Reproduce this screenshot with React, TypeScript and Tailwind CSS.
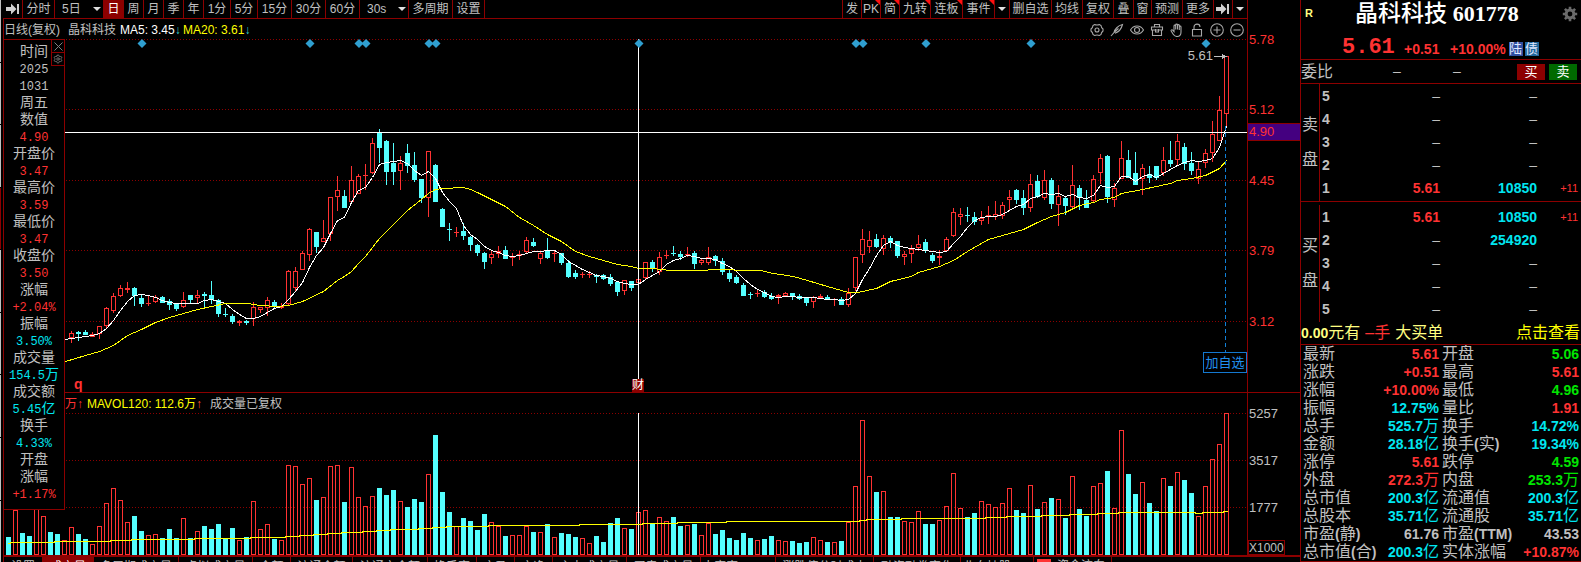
import React from "react";
import { Settings } from "lucide-react";

/* ------------------------------------------------------------------ data */

const UP = "#ff3232";
const DOWN = "#54ffff";
const GRID = "#8c0000";

// One entry per session: c = close down, r = close up, followed by the top of the volume bar.
const VOLUME = `c537 r510 c533 c536 r500 r516 c532 c534 r540 r527 c534 c539 r544 r526 r503 r488 r500 r522 c516 c531
r535 r534 c538 c529 c538 r518 c538 r531 c526 c529 c524 c538 c528 r540 c537 r501 r529 r524 c539 r540
r465 r466 r484 r478 c500 r497 r466 r465 c502 r467 r497 r506 r496 c488 c495 c490 r501 c507 c499 c502
r474 c435 c492 c512 r526 c518 c521 c530 c514 r522 r526 c536 r535 r535 r526 c532 r532 c524 r537 c533
c534 c537 r538 r543 c536 c542 c523 c518 r528 c529 r512 r510 c523 r517 r521 c517 c526 r525 c524 r535
r523 c534 c530 c538 c540 c533 c538 r540 c539 c536 r540 r541 c541 c543 c542 r537 r540 c542 r542 c541
r522 r486 r420 r476 c492 r491 c517 c517 r521 r522 r511 c524 c524 r520 r506 r473 r508 c517 c513 r501
r504 r507 r503 r488 c510 c513 r485 c509 r502 c498 r499 c518 r476 c509 c516 r486 r483 c471 r508 r430
c474 c494 r482 c503 c511 r478 c486 r472 c480 c493 r516 r486 r459 r444 r413`
  .split(/\s+/)
  .map((s) => ({ up: s[0] === "r", top: Number(s.slice(1)) }));

// high, body top, body bottom, low for each session, starting with FIRST_CANDLE.
const FIRST_CANDLE = 9;
const CANDLES = `331,333,337,342 331,332,333,340 330,332,334,334 332,334,336,336 326,326,333,338 307,308,325,327
293,296,310,312 285,288,295,296 282,288,289,292 287,288,295,305 295,298,303,306 296,303,303,305
295,297,301,302 296,297,302,302 299,301,304,309 303,303,308,310 292,300,306,307 295,295,299,303
290,295,297,302 292,294,295,307 281,295,299,303 299,300,313,316 308,314,314,316 314,316,321,323
320,321,322,325 320,321,322,324 302,307,318,325 307,307,309,312 297,300,307,315 300,302,305,307
303,306,307,308 270,271,303,304 267,271,287,290 251,253,269,269 228,229,254,260 232,232,246,252
220,238,241,241 197,197,233,240 176,190,196,210 190,196,207,207 166,180,201,202 174,176,193,193
164,175,175,189 138,143,172,173 129,132,147,162 140,141,171,184 143,163,171,184 156,163,170,189
144,153,165,172 152,165,179,181 179,179,197,202 151,151,197,216 164,165,201,201 208,209,226,226
223,229,229,240 227,232,232,236 223,231,235,239 236,237,244,250 244,245,252,255 252,253,261,268
250,254,257,263 246,251,253,257 246,250,258,258 253,256,257,265 251,254,255,259 237,240,251,252
238,242,245,246 251,253,258,263 238,251,257,258 251,253,253,261 253,253,262,264 260,263,276,277
270,273,276,278 272,274,274,277 271,274,274,277 274,275,276,282 274,275,278,279 274,277,283,285
281,282,291,295 280,280,290,294 281,281,287,290 269,279,282,282 262,262,277,278 260,262,268,271
252,257,271,274 250,255,255,258 246,253,253,255 251,254,256,259 247,254,254,256 251,253,263,268
258,260,262,264 247,257,262,264 255,256,260,265 258,261,271,274 269,273,278,281 275,277,282,283
283,285,295,295 292,294,294,298 289,293,293,296 290,292,296,297 293,296,298,299 294,295,296,303
292,293,295,295 293,293,295,299 294,296,298,299 297,298,302,305 296,297,301,307 294,296,297,298
295,297,299,299 298,299,299,305 297,299,304,304 288,293,304,306 257,257,287,290 229,239,254,262
231,240,246,252 234,239,246,247 235,238,248,254 236,238,242,247 241,241,255,257 251,254,256,264
245,249,253,262 235,244,247,250 239,242,250,252 253,255,260,262 250,256,257,264 237,239,250,250
208,212,235,236 208,214,216,224 207,215,215,221 212,217,221,224 211,218,220,224 206,215,216,223
201,214,216,219 202,205,215,218 190,197,199,209 189,190,199,203 190,198,207,214 174,184,207,211
175,181,196,197 170,180,197,199 178,180,203,208 185,196,204,225 196,198,205,214 165,185,206,208
185,188,197,209 190,200,207,207 175,179,200,202 154,158,172,183 155,156,196,202 183,188,199,206
141,158,178,178 150,160,177,177 152,173,184,184 164,168,178,194 166,174,177,182 166,166,177,179
147,160,172,175 141,160,163,166 134,141,159,165 143,147,163,169 152,163,170,174 162,169,178,183
149,153,162,167 121,134,152,161 96,110,140,140 56,56,113,126`
  .split(/\s+/)
  .map((s) => s.split(",").map(Number));

const MA5 = `338 337 336 335 333 328 320 310 301 295 294 295 297 300 302 303 303 303 303 300 299 301 303 309 314 318
318 316 312 308 306 299 291 282 267 255 247 233 220 217 202 190 187 177 164 162 161 160 163 170 175 171 178 192
201 208 225 234 239 246 250 252 255 256 255 253 251 251 250 250 254 261 265 269 272 275 276 278 281 283 284 284
279 275 271 264 260 258 255 256 258 258 259 263 266 271 278 284 289 292 296 297 296 296 297 297 297 298 299 299
300 299 293 279 268 255 245 241 245 247 248 249 250 251 252 251 243 236 227 220 217 216 216 214 210 206 204 198
196 193 194 193 196 194 197 198 195 185 187 186 176 176 181 176 174 177 173 169 165 162 160 161 160 158 147 126`
  .split(/\s+/)
  .map((y, k) => `${8 + 7 * (k + FIRST_CANDLE)},${y}`)
  .join(" ");

const MA20 =
  "65,361 85,355 99,351 113,345 127,335 141,329 155,322 169,317 183,313 197,309 211,306 225,303 247,303 260,305 277,306 288,305 302,301 323,291 337,280 344,276 351,271 358,263 365,256 372,247 379,238 393,224 407,210 421,199 428,193 435,189 442,188 463,187 470,189 477,192 491,199 505,206 519,217 533,225 547,234 561,241 575,251 589,256 603,260 617,264 631,266 638,268 652,268 670,270 703,270 713,269 727,269 740,270 760,270 773,273 793,276 807,280 827,286 848,292 857,292 876,288 890,281 911,276 918,272 939,266 953,260 967,251 988,239 1009,233 1023,229 1037,222 1051,216 1065,212 1079,205 1093,202 1100,199 1114,197 1121,193 1142,189 1156,186 1170,183 1177,180 1191,178 1205,175 1219,168 1226,160";

const MAVOL =
  "8,543 12,542 54,542 54,541 110,541 110,540 131,540 131,539 194,539 194,538 250,538 250,537 285,537 285,536 299,536 299,535 313,535 313,534 327,534 327,533 341,533 341,532 362,532 362,531 376,531 376,530 390,530 390,529 418,529 418,528 432,528 432,527 446,527 446,526 488,526 488,525 579,525 579,524 642,524 642,523 677,523 677,522 726,522 726,521 859,521 859,520 866,520 866,519 901,519 901,518 985,518 985,517 1006,517 1006,516 1041,516 1041,515 1069,515 1069,514 1097,514 1097,513 1118,513 1118,512 1195,512 1195,513 1202,513 1202,512 1223,512 1223,511 1227,511";

const EVENTS = [142, 310, 359, 366, 429, 436, 639, 856, 863, 926, 1031, 1206];

const READOUT: [string, string][] = [
  ["时间", ""], ["2025", ""], ["1031", ""], ["周五", ""],
  ["数值", ""], ["4.90", "up"],
  ["开盘价", ""], ["3.47", "up"],
  ["最高价", ""], ["3.59", "up"],
  ["最低价", ""], ["3.47", "up"],
  ["收盘价", ""], ["3.50", "up"],
  ["涨幅", ""], ["+2.04%", "up"],
  ["振幅", ""], ["3.50%", "flat"],
  ["成交量", ""], ["154.5万", "flat"],
  ["成交额", ""], ["5.45亿", "flat"],
  ["换手", ""], ["4.33%", "flat"],
  ["开盘", ""], ["涨幅", ""], ["+1.17%", "up"],
];

const TONE: Record<string, string> = {
  "": "text-[#c0c0c0]",
  up: "text-[#ff3232]",
  down: "text-[#00e600]",
  flat: "text-[#00e6f0]",
};

const QUOTES: [string, string, string, string, string, string][] = [
  ["最新", "5.61", "up", "开盘", "5.06", "down"],
  ["涨跌", "+0.51", "up", "最高", "5.61", "up"],
  ["涨幅", "+10.00%", "up", "最低", "4.96", "down"],
  ["振幅", "12.75%", "flat", "量比", "1.91", "up"],
  ["总手", "525.7万", "flat", "换手", "14.72%", "flat"],
  ["金额", "28.18亿", "flat", "换手(实)", "19.34%", "flat"],
  ["涨停", "5.61", "up", "跌停", "4.59", "down"],
  ["外盘", "272.3万", "up", "内盘", "253.3万", "down"],
  ["总市值", "200.3亿", "flat", "流通值", "200.3亿", "flat"],
  ["总股本", "35.71亿", "flat", "流通股", "35.71亿", "flat"],
  ["市盈(静)", "61.76", "", "市盈(TTM)", "43.53", ""],
  ["总市值(合)", "200.3亿", "flat", "实体涨幅", "+10.87%", "up"],
];

const PERIODS_A: [string, string][] = [
  ["周", "w-[20px]"], ["月", "w-[20px]"], ["季", "w-[20px]"], ["年", "w-[20px]"],
  ["1分", "w-[27px]"], ["5分", "w-[27px]"], ["15分", "w-[34px]"], ["30分", "w-[34px]"], ["60分", "w-[34px]"],
];

const TOOLS_A: [string, string, boolean][] = [
  ["发", "w-[19px]", false], ["PK", "w-[19px]", true], ["简", "w-[19px]", true],
  ["九转", "w-[31px]", true], ["连板", "w-[32px]", true], ["事件", "w-[32px]", true],
];

const TOOLS_B: [string, string][] = [
  ["删自选", "w-[42px]"], ["均线", "w-[31px]"], ["复权", "w-[31px]"], ["叠", "w-[20px]"],
  ["窗", "w-[18px]"], ["预测", "w-[31px]"], ["更多", "w-[31px]"],
];

const TABS: [string, string][] = [
  ["设置", "w-[39px]"], ["成交量", "w-[51px]"], ["多周期成交量", "w-[85px]"], ["虚拟成交量", "w-[74px]"],
  ["金额", "w-[38px]"], ["流通金额", "w-[62px]"], ["流通市金额", "w-[75px]"], ["换手率", "w-[49px]"],
  ["市盈", "w-[38px]"], ["市净", "w-[38px]"], ["主力成交量", "w-[74px]"], ["买卖成交量", "w-[74px]"],
  ["大宗家MACD", "w-[75px]"], ["涨跌停分时成本", "w-[98px]"], ["融资融券变化", "w-[87px]"], ["北向持股100", "w-[73px]"],
];

/* ----------------------------------------------------------------- parts */

const CJK = "[font-family:'Liberation_Sans','Noto_Sans_CJK_SC',sans-serif]";

/** Latin characters bold and small, Chinese characters regular and larger. */
function Mixed({ text }: { text: string }) {
  const parts = text.match(/[\u4e00-\u9fff]+|[^\u4e00-\u9fff]+/g) ?? [];
  return (
    <>
      {parts.map((p, i) =>
        /[\u4e00-\u9fff]/.test(p) ? (
          <span key={i} className="text-[16px] font-normal">{p}</span>
        ) : (
          <span key={i} className="text-[14px] font-bold">{p}</span>
        ),
      )}
    </>
  );
}

function Caret() {
  return (
    <svg width="8" height="4" viewBox="0 0 8 4" aria-hidden="true">
      <path d="M0 0h8L4 4z" fill="#e0e0e0" />
    </svg>
  );
}

function SkipIcon() {
  return (
    <svg width="14" height="12" viewBox="0 0 14 12" aria-hidden="true">
      <path d="M0 4h5V0.5L10.5 6 5 11.500V8H0z M11 1h2v10h-2z" fill="#d0d0d0" />
    </svg>
  );
}

function BarButton({ label, width, flag, active }: { label: string; width: string; flag?: boolean; active?: boolean }) {
  return (
    <button
      type="button"
      className={`relative flex h-full shrink-0 items-center justify-center whitespace-nowrap border-r border-[#8c0000] ${width} ${
        active ? "bg-[#8c0000] text-white" : ""
      }`}
    >
      {label}
      {flag && (
        <svg className="absolute right-0 top-0" width="5" height="5" viewBox="0 0 5 5" aria-hidden="true">
          <path d="M0 0h5v5z" fill="#ff1010" />
        </svg>
      )}
    </button>
  );
}

function BarSelect({ label, value }: { label: string; value: string }) {
  return (
    <label className="relative flex h-full w-[49px] shrink-0 items-center border-r border-[#8c0000]">
      <select aria-label={label} className="h-full w-full appearance-none bg-transparent pl-[7px] outline-none">
        <option>{value}</option>
      </select>
      <span className="pointer-events-none absolute right-[2px] top-[7px]">
        <Caret />
      </span>
    </label>
  );
}

function Toolbar() {
  return (
    <nav className="flex h-[19px] shrink-0 overflow-hidden border-b border-[#8c0000] text-[12px]">
      <button type="button" aria-label="跳到最新" className="flex h-full w-[20px] shrink-0 items-center justify-center border-r border-[#8c0000]">
        <SkipIcon />
      </button>
      <BarButton label="分时" width="w-[32px]" />
      <BarSelect label="多日" value="5日" />
      <BarButton label="日" width="w-[20px]" active />
      {PERIODS_A.map(([l, w]) => (
        <BarButton key={l} label={l} width={w} />
      ))}
      <BarSelect label="秒周期" value="30s" />
      <BarButton label="多周期" width="w-[44px]" />
      <BarButton label="设置" width="w-[32px]" />
      <div className="flex h-full flex-1 border-r border-[#8c0000]" />
      {TOOLS_A.map(([l, w, f]) => (
        <BarButton key={l} label={l} width={w} flag={f} />
      ))}
      <button type="button" aria-label="更多事件" className="flex h-full w-[15px] shrink-0 items-center justify-center border-r border-[#8c0000]">
        <Caret />
      </button>
      {TOOLS_B.map(([l, w]) => (
        <BarButton key={l} label={l} width={w} />
      ))}
      <button type="button" aria-label="收起" className="flex h-full w-[19px] shrink-0 items-center justify-center border-r border-[#8c0000]">
        <SkipIcon />
      </button>
      <button type="button" aria-label="展开" className="flex h-full w-[14px] shrink-0 items-center justify-center">
        <Caret />
      </button>
    </nav>
  );
}

const CHART_ICONS: [string, React.ReactNode][] = [
  ["设置", <><path d="M4.500 1.500c1.500.6 3.500.6 5 0l1.500 1c.1 1.500.8 2.600 2 3.500v2c-1.200.9-1.900 2-2 3.500l-1.500 1c-1.500-.6-3.500-.6-5 0l-1.500-1C2.900 10 2.200 8.900 1 8V6c1.200-.9 1.900-2 2-3.500z" /><circle cx="7" cy="7" r="2" /></>],
  ["画笔", <path d="M1 13 4 9.500C4.500 6.500 8 2.500 12.500 1.500 11.500 5.500 8.500 9 5 10.200M4 9.500 8.500 5.500" />],
  ["显示", <><path d="M.5 7C3.500 1.700 10.500 1.700 13.500 7 10.500 12.300 3.500 12.300.5 7z" /><circle cx="7" cy="7" r="2.500" /></>],
  ["工具箱", <path d="M4.500 4V1.500h5V4M1.500 4h11v3h-11zM2.500 7v5.500h9V7M5.500 6v3h3V6" />],
  ["拖动", <path d="M4 8.500V3c0-1.200 1.700-1.200 1.700 0v3.500V2c0-1.200 1.800-1.200 1.800 0v4.500V2.500c0-1.200 1.800-1.200 1.800 0V7 4c0-1.200 1.700-1.200 1.700 0v5c0 3-1.500 4.500-4 4.500-2.200 0-3-.9-4-2.500L1.200 8c-.5-1 .8-1.700 1.500-.9z" />],
  ["锁定", <path d="M2.500 6.500h9v6.500h-9zM4 6.500V4c0-3.800 6-3.800 6 0" />],
  ["放大", <><circle cx="7" cy="7" r="6.300" /><path d="M7 3.500v7M3.500 7h7" /></>],
  ["缩小", <><circle cx="7" cy="7" r="6.300" /><path d="M3.500 7h7" /></>],
];

function TitleRow() {
  return (
    <div className="flex h-[20px] shrink-0 items-center justify-between pr-[3px] pt-px text-[12px]">
      <div className="flex items-center whitespace-nowrap">
        <span className="w-[64px]">日线(复权)</span>
        <span className="w-[52px]">晶科科技</span>
        <span className="w-[63px] text-white">MA5: 3.45<span className="text-[#30d0d0]">↓</span></span>
        <span className="text-[#ffff00]">MA20: 3.61<span className="text-[#30d0d0]">↓</span></span>
      </div>
      <div className="flex gap-[6px]">
        {CHART_ICONS.map(([name, art]) => (
          <button key={name} type="button" aria-label={name}>
            <svg width="14" height="14" viewBox="0 0 14 14" fill="none" stroke="#a8a8a8" strokeWidth="1.100">
              {art}
            </svg>
          </button>
        ))}
      </div>
    </div>
  );
}

function GridLines({ at }: { at: number[] }) {
  return (
    <>
      {at.map((y) => (
        <line key={y} x1="66" x2="1247" y1={y + 0.5} y2={y + 0.5} stroke={GRID} strokeDasharray="1 2" />
      ))}
    </>
  );
}

function PriceChart() {
  return (
    <div className="relative border-b border-[#8c0000]">
      <svg className="block h-[353px] w-full" viewBox="4 39 1243 353" preserveAspectRatio="none" shapeRendering="crispEdges">
        <GridLines at={[39, 109, 180, 250, 321]} />
        {CANDLES.map(([high, top, bottom, low], k) => {
          const i = k + FIRST_CANDLE;
          const x = 8 + 7 * i;
          const up = VOLUME[i].up;
          const color = up ? UP : DOWN;
          const hollow = up && bottom - top > 1;
          return (
            <g key={i} fill={color}>
              <rect x={x} y={high} width="1" height={Math.max(0, top - high)} />
              <rect x={x} y={bottom} width="1" height={low - bottom + 1} />
              {hollow ? (
                <rect x={x - 1.5} y={top + 0.5} width="4" height={bottom - top} fill="none" stroke={color} />
              ) : (
                <rect x={x - 2} y={top} width="5" height={bottom - top + 1} />
              )}
            </g>
          );
        })}
        <polyline points={"65,339 " + MA5} transform="translate(0.5 0.5)" fill="none" stroke="#ffffff" />
        <polyline points={MA20} transform="translate(0.5 0.5)" fill="none" stroke="#ffff00" />
        <rect x="4" y="132" width="1243" height="1" fill="#ffffff" />
        <path d="M1225.500 126V352" stroke="#1080d8" strokeDasharray="4 3" fill="none" />
        <rect x="638" y="39" width="1" height="353" fill="#ffffff" />
        {EVENTS.map((x) => (
          <path key={x} d={`M${x} 39l4.500 4.500l-4.500 4.500l-4.500-4.500z`} fill="#2f9fd0" shapeRendering="auto" />
        ))}
        <path d="M1214 56h8v-2l5 2.500-5 2.500v-2h-8z" fill="#c0c0c0" />
      </svg>
      <span className="absolute right-[34px] top-[9px] text-[13px] leading-[16px]">5.61</span>
      <button type="button" className="absolute bottom-[19px] right-0 h-[21px] w-[44px] whitespace-nowrap border border-[#1478d0] bg-black text-[13px] leading-[19px] text-[#2090f0]">
        加自选
      </button>
      <span className="absolute bottom-0 left-[70px] text-[14px] font-bold leading-[16px] text-[#ff3232]">q</span>
      <span className="absolute bottom-0 left-[51%] -translate-x-1/2 bg-[#8c0000] text-[12px] leading-[13px] text-white">财</span>
    </div>
  );
}

function VolumeChart() {
  return (
    <>
      <div className="flex h-[20px] shrink-0 items-center whitespace-nowrap pl-[61px] pt-px text-[12px]">
        <span className="w-[22px] text-[#ff3232]">万↑</span>
        <span className="w-[123px] text-[#ffff00]">
          MAVOL120: 112.6万<span className="text-[#ff5030]">↑</span>
        </span>
        <span>成交量已复权</span>
      </div>
      <svg className="block h-[142px] w-full" viewBox="4 413 1243 142" preserveAspectRatio="none" shapeRendering="crispEdges">
        <GridLines at={[413, 460, 507]} />
        {VOLUME.map(({ up, top }, i) =>
          up ? (
            <rect key={i} x={6.5 + 7 * i} y={top + 0.5} width="4" height={554 - top} fill="none" stroke={UP} />
          ) : (
            <rect key={i} x={6 + 7 * i} y={top} width="5" height={555 - top} fill={DOWN} />
          ),
        )}
        <rect x="638" y="413" width="1" height="142" fill="#ffffff" />
        <polyline points={MAVOL} transform="translate(0.5 0.5)" fill="none" stroke="#ffff00" />
      </svg>
    </>
  );
}

function Axis() {
  return (
    <svg className="block h-[555px] w-[53px] shrink-0" viewBox="0 0 53 555" shapeRendering="crispEdges">
      <rect width="1" height="555" fill={GRID} />
      <rect y="392" width="53" height="1" fill={GRID} />
      <rect x="1" y="123" width="52" height="18" fill={GRID} />
      <rect x="1" y="124" width="52" height="16" fill="#440080" />
      <rect x="1.500" y="540.500" width="36" height="14" fill="none" stroke={GRID} />
      <g fontSize="13" fill="#ff3232">
        <text x="2" y="44">5.78</text>
        <text x="2" y="114">5.12</text>
        <text x="2" y="136">4.90</text>
        <text x="2" y="185">4.45</text>
        <text x="2" y="255">3.79</text>
        <text x="2" y="326">3.12</text>
      </g>
      <g fontSize="13" fill="#c0c0c0">
        <text x="2" y="418">5257</text>
        <text x="2" y="465">3517</text>
        <text x="2" y="512">1777</text>
        <text x="2" y="552" fontSize="12">X1000</text>
      </g>
    </svg>
  );
}

function Readout() {
  return (
    <section aria-label="光标数值" className="absolute -left-px top-[20px] w-[62px] border border-[#8c0000] bg-black pb-[7px] pt-[3px]">
      {READOUT.map(([text, tone], i) => (
        <p
          key={i}
          className={`h-[17px] whitespace-nowrap text-center text-[14px] leading-[17px] ${TONE[tone]}`}
        >
          {(text.match(/[\u4e00-\u9fff]+|[^\u4e00-\u9fff]+/g) ?? []).map((p, k) =>
            /[\u4e00-\u9fff]/.test(p) ? (
              <span key={k}>{p}</span>
            ) : (
              <span key={k} className="text-[12px] [font-family:'Liberation_Mono',monospace]">{p}</span>
            ),
          )}
        </p>
      ))}
      <div className="absolute right-0 top-0 flex w-[13px] flex-col border-l border-[#8c0000] bg-black">
        <button type="button" aria-label="关闭" className="flex h-[13px] items-center justify-center border-b border-[#8c0000]">
          <svg width="9" height="9" viewBox="0 0 9 9" stroke="#808080">
            <path d="M.5.5l8 8M8.500.5l-8 8" />
          </svg>
        </button>
        <button type="button" aria-label="面板设置" className="flex h-[13px] items-center justify-center border-b border-[#8c0000]">
          <Settings size={10} color="#808080" strokeWidth={2} />
        </button>
      </div>
    </section>
  );
}

function Tabs() {
  return (
    <nav className="flex h-[20px] shrink-0 overflow-hidden border-t border-[#8c0000] text-[12px]">
      <div className="flex flex-1 border-l border-t border-[#8c0000]">
        {TABS.map(([label, width], i) => (
          <button
            key={label}
            type="button"
            className={`h-[18px] shrink-0 whitespace-nowrap border-r border-[#8c0000] pt-[2px] leading-[14px] ${width} ${i === 1 ? "bg-[#8c0000] text-white" : ""}`}
          >
            {label}
          </button>
        ))}
        <button type="button" className="flex h-[18px] w-[78px] shrink-0 gap-[6px] whitespace-nowrap border-r border-[#8c0000] pl-[3px] pt-[2px] leading-[14px]">
          <span className="h-[12px] w-[14px] bg-[#ff3232]" />
          资金流向
        </button>
      </div>
    </nav>
  );
}

const BOOK_DASH = "–";

function Book({ side, rows, end }: { side: [string, string]; rows: [string, string, string, string][]; end?: boolean }) {
  return (
    <div className={`flex border-[#8c0000] ${end ? "" : "border-b"}`}>
      <div className="flex w-[19px] shrink-0 flex-col items-center justify-center gap-[11px] border-r border-[#8c0000] text-[16px] leading-[24px]">
        <span>{side[0]}</span>
        <span>{side[1]}</span>
      </div>
      <div className="flex-1 py-px">
        <table className="w-full table-fixed text-[14px] font-bold">
          <tbody>
            {rows.map(([n, price, vol, diff]) => (
              <tr key={n} className="h-[23px]">
                <th scope="row" className="w-[20px] p-0 pl-[2px] text-left">{n}</th>
                <td className={`w-[100px] p-0 text-right ${price === BOOK_DASH ? "font-normal" : "text-[#ff3232]"}`}>{price}</td>
                <td className={`w-[97px] p-0 text-right ${vol === BOOK_DASH ? "font-normal" : "text-[#00e6f0]"}`}>{vol}</td>
                <td className="p-0 pr-[3px] text-right text-[11px] font-normal text-[#ff3232]">{diff}</td>
              </tr>
            ))}
          </tbody>
        </table>
      </div>
    </div>
  );
}

function QuotePanel() {
  return (
    <aside className="w-[281px] shrink-0 self-start border-b border-l border-[#8c0000]">
      <header className="h-[59px]">
        <div className="flex h-[27px] items-center pl-[4px] pr-[3px]">
          <span className="w-[50px] text-[11px] font-bold text-[#ffff80]">R</span>
          <h1 className="flex-1 whitespace-nowrap text-[23px] font-medium leading-[27px] text-white [font-family:'Liberation_Serif','Noto_Sans_CJK_SC',serif]">
            晶科科技 <span className="text-[22px] font-bold">601778</span>
          </h1>
          <button type="button" aria-label="面板设置">
            <svg width="16" height="16" viewBox="0 0 16 16" aria-hidden="true">
              <circle cx="8" cy="8" r="3.900" fill="none" stroke="#6a6a6a" strokeWidth="3" />
              <g stroke="#6a6a6a" strokeWidth="2.600">
                <path d="M8 .8v2.400M8 12.800v2.400M.8 8h2.400M12.800 8h2.400M2.900 2.900l1.700 1.700M11.400 11.400l1.700 1.700M2.900 13.100l1.700-1.700M11.400 4.600l1.700-1.700" />
              </g>
            </svg>
          </button>
        </div>
        <div className="flex h-[32px] items-center whitespace-nowrap pl-[41px] text-[14px] font-bold text-[#ff3232]">
          <span className="w-[62px] pt-[10px] text-[22px] leading-[22px] [font-family:'Liberation_Mono',monospace]">5.61</span>
          <span className="w-[46px] pt-[12px] leading-[18px]">+0.51</span>
          <span className="w-[59px] pt-[12px] leading-[18px]">+10.00%</span>
          <span className="mt-[11px] flex gap-[2px] text-[13px] font-normal leading-[14px] text-[#e0e8ff]">
            <span className="w-[14px] bg-[#2f4fa0]">陆</span>
            <span className="w-[14px] bg-[#20679c]">债</span>
          </span>
        </div>
      </header>
      <div className="flex h-[25px] items-center border-y border-[#8c0000] pr-[4px] text-[16px]">
        <span className="w-[92px]">委比</span>
        <span className="w-[60px] text-[14px]">–</span>
        <span className="flex-1 text-[14px]">–</span>
        <span className="flex gap-[4px] text-[13px] text-white">
          <button type="button" className="h-[16px] w-[28px] bg-[#8c0000] leading-[16px]">买</button>
          <button type="button" className="h-[16px] w-[28px] bg-[#006a00] leading-[16px]">卖</button>
        </span>
      </div>
      <Book
        side={["卖", "盘"]}
        rows={[
          ["5", "–", "–", ""],
          ["4", "–", "–", ""],
          ["3", "–", "–", ""],
          ["2", "–", "–", ""],
          ["1", "5.61", "10850", "+11"],
        ]}
      />
      <div className="pt-[3px]">
        <Book
          end
          side={["买", "盘"]}
          rows={[
            ["1", "5.61", "10850", "+11"],
            ["2", "–", "254920", ""],
            ["3", "–", "–", ""],
            ["4", "–", "–", ""],
            ["5", "–", "–", ""],
          ]}
        />
      </div>
      <div className="flex h-[23px] items-center justify-between whitespace-nowrap border-b border-[#8c0000] text-[16px] text-[#ffff80]">
        <span className="flex gap-[5px]">
          <span><Mixed text="0.00元有" /></span>
          <span className="text-[#ff3232]">–手</span>
          <span>大买单</span>
        </span>
        <a href="#order" className="pr-px text-[#ffff00]">点击查看</a>
      </div>
      <table className="w-full table-fixed whitespace-nowrap">
        <tbody>
          {QUOTES.map(([l1, v1, t1, l2, v2, t2]) => (
            <tr key={l1} className="h-[18px] leading-[18px]">
              <th scope="row" className="h-[18px] w-[78px] p-0 pl-[2px] text-left font-normal leading-[18px]"><Mixed text={l1} /></th>
              <td className={`w-[60px] p-0 text-right leading-[18px] ${TONE[t1]}`}><Mixed text={v1} /></td>
              <th scope="row" className="w-[78px] p-0 pl-[3px] text-left font-normal leading-[18px]"><Mixed text={l2} /></th>
              <td className={`p-0 pr-[2px] text-right leading-[18px] ${TONE[t2]}`}><Mixed text={v2} /></td>
            </tr>
          ))}
        </tbody>
      </table>
    </aside>
  );
}

export default function App() {
  return (
    <div className={`flex h-screen overflow-hidden bg-black text-[#c0c0c0] ${CJK}`}>
      <div className="mr-[2px] flex w-px shrink-0 flex-col gap-px">
        {[0, 1, 2, 3, 4, 5, 6, 7, 8].map((i) => (
          <div key={i} className={`flex-1 ${i === 3 ? "bg-[#8c0000]" : "bg-[#c0c0c0]"}`} />
        ))}
      </div>
      <main className="flex min-w-0 flex-1 flex-col">
        <div className="flex">
          <div className="min-w-0 flex-1">
            <Toolbar />
            <div className="relative border-l border-[#8c0000]">
              <TitleRow />
              <PriceChart />
              <VolumeChart />
              <Readout />
            </div>
          </div>
          <Axis />
        </div>
        <Tabs />
      </main>
      <QuotePanel />
    </div>
  );
}
